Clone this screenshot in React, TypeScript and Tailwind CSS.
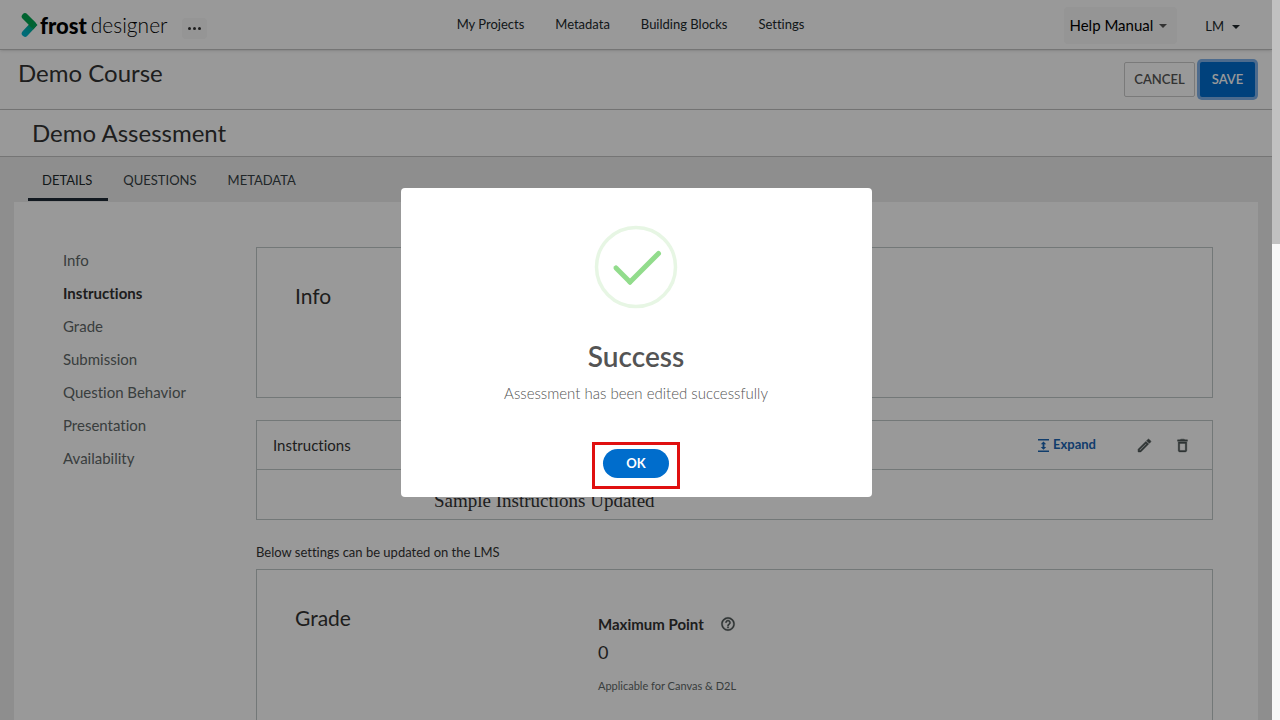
import React from 'react';

const navLinks = ['My Projects', 'Metadata', 'Building Blocks', 'Settings'];

const tabs = [
    { name: 'DETAILS', active: true },
    { name: 'QUESTIONS', active: false },
    { name: 'METADATA', active: false },
];

const sections = [
    { name: 'Info', active: false },
    { name: 'Instructions', active: true },
    { name: 'Grade', active: false },
    { name: 'Submission', active: false },
    { name: 'Question Behavior', active: false },
    { name: 'Presentation', active: false },
    { name: 'Availability', active: false },
];

const Caret = ({ className }: { className: string }) => (
    <svg viewBox="0 0 8 4" className={className} aria-hidden="true">
        <path d="M0 0h8L4 4z" fill="currentColor" />
    </svg>
);

const ExpandIcon = ({ className }: { className: string }) => (
    <svg viewBox="0 0 12 14" className={className} aria-hidden="true">
        <path d="M0 0h12v1.500H0zM0 12.500h12V14H0zM6 2.500l3 3H7v3h2l-3 3-3-3h2v-3H3z" fill="currentColor" />
    </svg>
);

const PencilIcon = ({ className }: { className: string }) => (
    <svg viewBox="0 0 24 24" className={className} fill="currentColor" stroke="currentColor" strokeWidth="0.8" aria-hidden="true">
        <path d="M14.060 9.020l.920.920L5.920 19H5v-.920l9.060-9.060M17.660 3c-.250 0-.510.100-.700.290l-1.830 1.830 3.750 3.750 1.830-1.830c.390-.390.390-1.020 0-1.410l-2.340-2.340c-.200-.200-.450-.290-.710-.290zm-3.600 3.190L3 17.250V21h3.750L17.810 9.940l-3.750-3.750z" />
    </svg>
);

const TrashIcon = ({ className }: { className: string }) => (
    <svg viewBox="0 0 24 24" className={className} fill="currentColor" stroke="currentColor" strokeWidth="0.6" aria-hidden="true">
        <path d="M16 9v10H8V9h8m-1.500-6h-5l-1 1H5v2h14V4h-3.500l-1-1zM18 7H6v12c0 1.100.900 2 2 2h8c1.100 0 2-.900 2-2V7z" />
    </svg>
);

const HelpIcon = ({ className }: { className: string }) => (
    <svg viewBox="0 0 24 24" className={className} fill="currentColor" stroke="currentColor" strokeWidth="0.5" aria-hidden="true">
        <path d="M11 18h2v-2h-2v2zm1-16C6.480 2 2 6.480 2 12s4.480 10 10 10 10-4.480 10-10S17.520 2 12 2zm0 18c-4.410 0-8-3.590-8-8s3.590-8 8-8 8 3.590 8 8-3.590 8-8 8zm0-14c-2.210 0-4 1.790-4 4h2c0-1.100.900-2 2-2s2 .900 2 2c0 2-3 1.750-3 5h2c0-2.250 3-2.500 3-5 0-2.210-1.790-4-4-4z" />
    </svg>
);

const Logo = () => (
    <a href="#home" className="flex h-8 items-center text-black">
        <svg viewBox="0 0 17 24" fill="none" className="h-6 w-[17px]" aria-hidden="true">
            <defs>
                <linearGradient id="teal" x1="12" y1="12" x2="4" y2="20" gradientUnits="userSpaceOnUse">
                    <stop offset="0" stopColor="#00a651" />
                    <stop offset="0.4" stopColor="#00b0a0" />
                    <stop offset="1" stopColor="#00b3c8" />
                </linearGradient>
            </defs>
            <path d="M4 20.500L11.500 12.500" stroke="url(#teal)" strokeWidth="6.500" strokeLinecap="round" />
            <path d="M4 3.500L12 11.500" stroke="#00a651" strokeWidth="6.500" strokeLinecap="round" />
            <path d="M12 7.500L16.500 12 12 16.500z" fill="#00a65c" />
        </svg>
        <span className="ml-0.5 text-[22px] font-black">frost</span>
        <span className="ml-1 text-[21px] font-light">designer</span>
    </a>
);

const TopBar = () => (
    <header className="flex h-[50px] shrink-0 items-start justify-between border-b border-[#c4c4c4] pr-8 pl-[21px] text-[#21292c] shadow-sm">
        <div className="flex flex-1 items-start gap-[14px] pt-[9px]">
            <Logo />
            <button aria-label="More" className="mt-[9px] flex h-[21px] w-[25px] items-center justify-center gap-[2px] rounded-sm bg-[#f8f8f8]">
                <span className="size-[3px] rounded-full bg-[#333]" />
                <span className="size-[3px] rounded-full bg-[#333]" />
                <span className="size-[3px] rounded-full bg-[#333]" />
            </button>
        </div>
        <nav className="flex gap-[31px] pt-[14px] text-[13px] leading-5">
            {navLinks.map(link => (
                <a key={link} href="#nav">{link}</a>
            ))}
        </nav>
        <div className="flex flex-1 justify-end gap-7 pt-[7px]">
            <button className="flex h-[37px] items-center gap-[6px] rounded bg-[#f8f8f8] pr-[10px] pl-[5px] text-[15px] text-black">
                Help Manual
                <Caret className="h-1 w-2 text-[#555]" />
            </button>
            <button className="flex h-[39px] items-center gap-2 text-[13px]">
                LM
                <Caret className="h-1 w-2" />
            </button>
        </div>
    </header>
);

const TitleBars = () => (
    <>
        <div className="flex h-[60px] shrink-0 items-start justify-between border-b border-[#c4c4c4] pr-[17px] pl-[18px]">
            <h1 className="pt-[7px] text-2xl leading-8">Demo Course</h1>
            <div className="flex gap-[5px] pt-3 text-[13px] font-semibold">
                <button className="h-[35px] w-[71px] rounded-xs border border-[#ccc] text-[#555]">CANCEL</button>
                <button className="h-[35px] w-[55px] rounded-xs bg-[#006dcf] text-white ring-3 ring-[#80b3eb]">SAVE</button>
            </div>
        </div>
        <div className="flex h-[47px] shrink-0 items-center border-b border-[#c4c4c4] px-8 shadow-sm">
            <h2 className="text-2xl">Demo Assessment</h2>
        </div>
    </>
);

const InstructionsCard = () => (
    <section className="mt-[22px] border border-[#c0c8c8]">
        <div className="flex h-[49px] items-center border-b border-[#c0c8c8] pr-[21px] pl-4">
            <h3 className="flex-1 text-[15px]">Instructions</h3>
            <button className="flex items-center gap-1 text-[13px] font-bold text-[#1c66b5]">
                <ExpandIcon className="h-[13px] w-[11px]" />
                Expand
            </button>
            <button aria-label="Edit" className="ml-10 text-[#4d5656]">
                <PencilIcon className="size-[17px]" />
            </button>
            <button aria-label="Delete" className="ml-[21px] text-[#4d5656]">
                <TrashIcon className="size-[17px]" />
            </button>
        </div>
        <div className="flex h-[49px] items-end pb-[6px] pl-[177px]">
            <p className="font-['Liberation_Serif',serif] text-[19px] leading-6">Sample Instructions Updated</p>
        </div>
    </section>
);

const GradeCard = () => (
    <section className="mt-[7px] flex h-64 border border-[#c0c8c8] pt-8 pl-[38px]">
        <h3 className="w-[303px] text-[21px] leading-8">Grade</h3>
        <div>
            <div className="flex items-center gap-4 pt-[10px] text-[15px] leading-6 font-bold">
                Maximum Point
                <HelpIcon className="size-4 text-[#4d5656]" />
            </div>
            <p className="mt-1 text-lg leading-6">0</p>
            <p className="mt-3 text-[11px] leading-5 text-[#606868]">Applicable for Canvas &amp; D2L</p>
        </div>
    </section>
);

const SuccessDialog = () => (
    <div className="absolute inset-0 flex justify-center bg-black/40 pt-[188px]">
        <div
            role="dialog"
            aria-labelledby="dialog-title"
            className="flex h-[309px] w-[471px] flex-col items-center rounded bg-white pt-[37px]"
        >
            <svg viewBox="0 0 84 84" fill="none" className="size-[84px]" aria-hidden="true">
                <circle cx="42" cy="42" r="39.500" stroke="#e7f6e4" strokeWidth="3.500" />
                <path d="M22 43l14 14" stroke="#92dc8c" strokeWidth="5" strokeLinecap="round" />
                <path d="M36 57L64.500 28.500" stroke="#92dc8c" strokeWidth="5" strokeLinecap="round" />
            </svg>
            <h2 id="dialog-title" className="mt-[27px] text-[28px] leading-10 font-semibold text-[#545454]">Success</h2>
            <p className="mt-[5px] text-[15px] leading-6 font-light text-[#545454]">Assessment has been edited successfully</p>
            <div className="mt-[37px] flex h-[47px] w-[88px] justify-center border-3 border-[#e01010] pt-1">
                <button className="h-[29px] w-[66px] rounded-full bg-[#006dcc] text-[13px] font-bold text-white">OK</button>
            </div>
        </div>
    </div>
);

const App = () => {
    return (
        <div className="flex h-screen overflow-hidden bg-white font-['Lato',sans-serif] text-[#333] [font-variant-ligatures:none]">
            <div className="relative flex min-w-0 flex-1 flex-col overflow-hidden">
                <TopBar />
                <TitleBars />
                <div className="flex flex-1 flex-col bg-[#ededed] px-[14px]">
                    <div className="flex h-[45px] shrink-0 gap-px pl-[14px] text-[13px] text-[#364044]">
                        {tabs.map(tab => (
                            <button
                                key={tab.name}
                                className={`h-11 border-b-3 pt-1.5 pr-4 pl-[14px] ${tab.active ? 'border-[#1f2a36] text-[#21292c]' : 'border-transparent'}`}
                            >
                                {tab.name}
                            </button>
                        ))}
                    </div>
                    <main className="flex flex-1 bg-white pt-[42px] pr-[45px] pl-[49px]">
                        <nav className="flex w-[193px] shrink-0 flex-col text-[15px] leading-[33px] text-[#606868]">
                            {sections.map(section => (
                                <a key={section.name} href="#section" className={section.active ? 'font-bold text-[#333]' : ''}>
                                    {section.name}
                                </a>
                            ))}
                        </nav>
                        <div className="min-w-0 flex-1 pt-[3px]">
                            <section className="h-[151px] border border-[#c0c8c8] pt-8 pl-[38px]">
                                <h3 className="text-[21px] leading-8">Info</h3>
                            </section>
                            <InstructionsCard />
                            <p className="mt-[22px] text-[13px] leading-5">Below settings can be updated on the LMS</p>
                            <GradeCard />
                        </div>
                    </main>
                </div>
                <SuccessDialog />
            </div>
            <div className="w-2 shrink-0 bg-[#f8f8f8]">
                <div className="h-[244px] bg-[#c1c1c1]" />
            </div>
        </div>
    );
};

export default App;
